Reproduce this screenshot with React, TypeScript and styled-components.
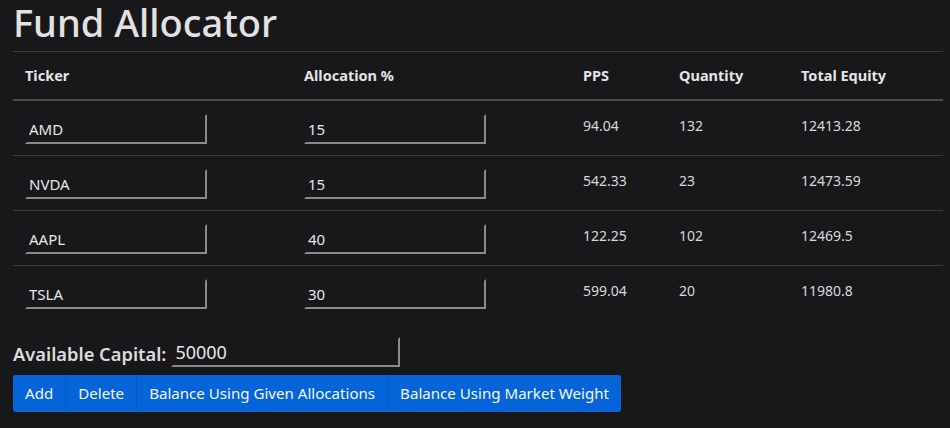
import React, { ChangeEvent, useState } from 'react';
import styled, { createGlobalStyle } from 'styled-components';

type Holding = {
  ticker: string;
  allocation: string;
  pps: string;
  quantity: string;
  equity: string;
};

const GlobalStyle = createGlobalStyle`
  html, body {
    margin: 0;
    background: #18181b;
  }
  body {
    font-family: 'Noto Sans', 'Open Sans', sans-serif;
    color: #dedede;
  }
`;

const Page = styled.div`
  padding: 0 7px 0 13px;
  width: 930px;
`;

const Title = styled.h1`
  margin: -4px 0 0;
  font-size: 38px;
  font-weight: 500;
  line-height: 52px;
  height: 55px;
  color: #e2e2e2;
`;

const Table = styled.table`
  width: 930px;
  table-layout: fixed;
  border-collapse: collapse;
  font-size: 14px;
`;

const HeadCell = styled.th<{ $width: number }>`
  box-sizing: border-box;
  width: ${(p) => p.$width}px;
  text-align: left;
  font-weight: 700;
  font-size: 14.5px;
  padding: 0 12px;
  height: 48px;
  border-top: 1px solid #3a3a3d;
  border-bottom: 2px solid #4a4a4d;
  color: #e4e4e4;
`;

const Row = styled.tr`
  border-bottom: 1px solid #3a3a3d;
  &:last-child {
    border-bottom: none;
  }
`;

const Cell = styled.td`
  padding: 0 12px;
  height: 54px;
  color: #d8d8d8;
  vertical-align: middle;
  & > span {
    position: relative;
    top: -2px;
  }
`;

const Field = styled.input<{ $width: number }>`
  box-sizing: border-box;
  width: ${(p) => p.$width}px;
  height: 30px;
  margin-top: 2px;
  padding: 0 2px;
  background: #18181b;
  color: #e6e6e6;
  font-family: 'Noto Sans', 'Open Sans', sans-serif;
  font-size: 15px;
  border: 2px solid;
  border-color: #18181b #8a8a8a #8a8a8a #18181b;
  outline: none;
`;

const CapitalRow = styled.div`
  display: flex;
  align-items: flex-end;
  gap: 5px;
  margin-top: 17px;
  height: 30px;
`;

const CapitalLabel = styled.label`
  font-size: 18.3px;
  font-weight: 600;
  color: #dcdcdc;
  line-height: 26px;
`;

const CapitalInput = styled(Field)`
  font-size: 18px;
  height: 30px;
  padding: 0 2px;
`;

const ButtonGroup = styled.div`
  display: inline-flex;
  margin-top: 8px;
  background: #0664d9;
  border-radius: 3px;
  overflow: hidden;
`;

const GroupButton = styled.button`
  background: #0664d9;
  color: #f2f6ff;
  border: none;
  border-left: 1px solid #0758c0;
  font-family: 'Noto Sans', 'Open Sans', sans-serif;
  font-size: 15.1px;
  height: 37px;
  padding: 0 12px;
  cursor: pointer;
  &:first-child {
    border-left: none;
  }
`;

const initial: Holding[] = [
  { ticker: 'AMD', allocation: '15', pps: '94.04', quantity: '132', equity: '12413.28' },
  { ticker: 'NVDA', allocation: '15', pps: '542.33', quantity: '23', equity: '12473.59' },
  { ticker: 'AAPL', allocation: '40', pps: '122.25', quantity: '102', equity: '12469.5' },
  { ticker: 'TSLA', allocation: '30', pps: '599.04', quantity: '20', equity: '11980.8' },
];

const App: React.FC = () => {
  const [holdings, setHoldings] = useState<Holding[]>(initial);
  const [capital, setCapital] = useState('50000');

  const update =
    (index: number, key: 'ticker' | 'allocation') => (e: ChangeEvent<HTMLInputElement>) =>
      setHoldings((list) =>
        list.map((h, i) => (i === index ? { ...h, [key]: e.target.value } : h)),
      );

  return (
    <Page>
      <GlobalStyle />
      <Title>Fund Allocator</Title>
      <Table>
        <thead>
          <tr>
            <HeadCell $width={279}>Ticker</HeadCell>
            <HeadCell $width={279}>Allocation %</HeadCell>
            <HeadCell $width={96}>PPS</HeadCell>
            <HeadCell $width={122}>Quantity</HeadCell>
            <HeadCell $width={154}>Total Equity</HeadCell>
          </tr>
        </thead>
        <tbody>
          {holdings.map((h, i) => (
            <Row key={i}>
              <Cell>
                <Field $width={182} value={h.ticker} onChange={update(i, 'ticker')} />
              </Cell>
              <Cell>
                <Field $width={182} value={h.allocation} onChange={update(i, 'allocation')} />
              </Cell>
              <Cell>
                <span>{h.pps}</span>
              </Cell>
              <Cell>
                <span>{h.quantity}</span>
              </Cell>
              <Cell>
                <span>{h.equity}</span>
              </Cell>
            </Row>
          ))}
        </tbody>
      </Table>
      <CapitalRow>
        <CapitalLabel>Available Capital:</CapitalLabel>
        <CapitalInput
          $width={229}
          value={capital}
          onChange={(e) => setCapital(e.target.value)}
        />
      </CapitalRow>
      <ButtonGroup>
        <GroupButton>Add</GroupButton>
        <GroupButton>Delete</GroupButton>
        <GroupButton>Balance Using Given Allocations</GroupButton>
        <GroupButton>Balance Using Market Weight</GroupButton>
      </ButtonGroup>
    </Page>
  );
};

export default App;
